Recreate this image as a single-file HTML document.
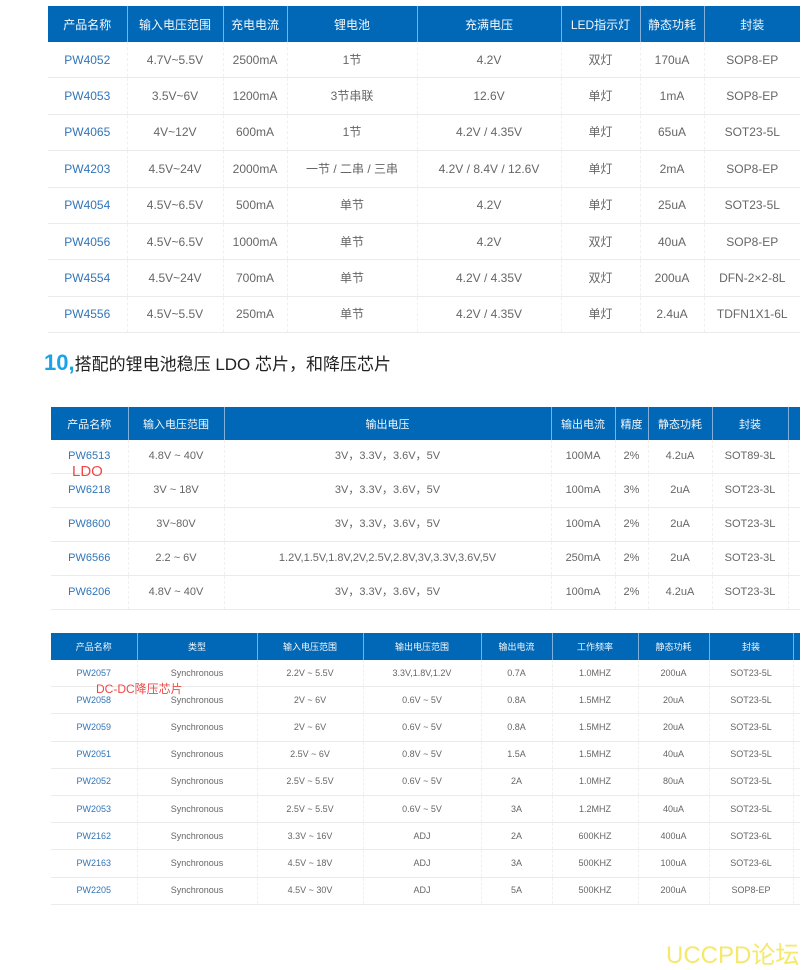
<!DOCTYPE html>
<html><head><meta charset="utf-8"><style>
body{margin:0;width:806px;height:966px;background:#fff;position:relative;overflow:hidden;font-family:"Liberation Sans","Noto Sans CJK SC",sans-serif;}
table{position:absolute;border-collapse:collapse;table-layout:fixed;}
th{background:#0068b7;color:#f4f8fc;font-weight:normal;border-left:1px solid #7fb0dc;padding:0;text-align:center;}
th:first-child{border-left:none;}
td{padding:0;text-align:center;color:#666;border-bottom:1px solid #ebebeb;border-left:1px dashed #f0f0f0;line-height:1;}
td:first-child{color:#3275b8;border-left:none;}
#t1{left:48px;top:6px;width:752px;font-size:12px;}
#t1 th{height:36px;font-size:12px}
#t1 td{height:35.4px}
#t2{left:51px;top:407px;width:749px;font-size:11px;}
#t2 th{height:33px}
#t2 td{height:33px}
#t3{left:51px;top:633px;width:749px;font-size:9px;}
#t3 th{height:27px}
#t3 td{height:26.2px}
.lbl{position:absolute;color:#f04848;}
</style></head><body>
<table id="t1">
<colgroup><col style="width:79px"><col style="width:96px"><col style="width:64px"><col style="width:130px"><col style="width:144px"><col style="width:79px"><col style="width:64px"><col style="width:96px"></colgroup>
<tr><th>产品名称</th><th>输入电压范围</th><th>充电电流</th><th>锂电池</th><th>充满电压</th><th>LED指示灯</th><th>静态功耗</th><th>封装</th></tr>
<tr><td>PW4052</td><td>4.7V~5.5V</td><td>2500mA</td><td>1节</td><td>4.2V</td><td>双灯</td><td>170uA</td><td>SOP8-EP</td></tr>
<tr><td>PW4053</td><td>3.5V~6V</td><td>1200mA</td><td>3节串联</td><td>12.6V</td><td>单灯</td><td>1mA</td><td>SOP8-EP</td></tr>
<tr><td>PW4065</td><td>4V~12V</td><td>600mA</td><td>1节</td><td>4.2V / 4.35V</td><td>单灯</td><td>65uA</td><td>SOT23-5L</td></tr>
<tr><td>PW4203</td><td>4.5V~24V</td><td>2000mA</td><td>一节 / 二串 / 三串</td><td>4.2V / 8.4V / 12.6V</td><td>单灯</td><td>2mA</td><td>SOP8-EP</td></tr>
<tr><td>PW4054</td><td>4.5V~6.5V</td><td>500mA</td><td>单节</td><td>4.2V</td><td>单灯</td><td>25uA</td><td>SOT23-5L</td></tr>
<tr><td>PW4056</td><td>4.5V~6.5V</td><td>1000mA</td><td>单节</td><td>4.2V</td><td>双灯</td><td>40uA</td><td>SOP8-EP</td></tr>
<tr><td>PW4554</td><td>4.5V~24V</td><td>700mA</td><td>单节</td><td>4.2V / 4.35V</td><td>双灯</td><td>200uA</td><td>DFN-2×2-8L</td></tr>
<tr><td>PW4556</td><td>4.5V~5.5V</td><td>250mA</td><td>单节</td><td>4.2V / 4.35V</td><td>单灯</td><td>2.4uA</td><td>TDFN1X1-6L</td></tr>
</table>
<div style="position:absolute;left:44px;top:350px;font-size:17px;color:#222;white-space:nowrap"><span style="color:#1aa3e8;font-size:22px;font-weight:bold">10,</span>搭配的锂电池稳压 LDO 芯片，和降压芯片</div>
<table id="t2">
<colgroup><col style="width:77px"><col style="width:96px"><col style="width:327px"><col style="width:64px"><col style="width:33px"><col style="width:64px"><col style="width:76px"><col style="width:12px"></colgroup>
<tr><th>产品名称</th><th>输入电压范围</th><th>输出电压</th><th>输出电流</th><th>精度</th><th>静态功耗</th><th>封装</th><th></th></tr>
<tr><td>PW6513</td><td>4.8V ~ 40V</td><td>3V，3.3V，3.6V，5V</td><td>100MA</td><td>2%</td><td>4.2uA</td><td>SOT89-3L</td><td></td></tr>
<tr><td>PW6218</td><td>3V ~ 18V</td><td>3V，3.3V，3.6V，5V</td><td>100mA</td><td>3%</td><td>2uA</td><td>SOT23-3L</td><td></td></tr>
<tr><td>PW8600</td><td>3V~80V</td><td>3V，3.3V，3.6V，5V</td><td>100mA</td><td>2%</td><td>2uA</td><td>SOT23-3L</td><td></td></tr>
<tr><td>PW6566</td><td>2.2 ~ 6V</td><td>1.2V,1.5V,1.8V,2V,2.5V,2.8V,3V,3.3V,3.6V,5V</td><td>250mA</td><td>2%</td><td>2uA</td><td>SOT23-3L</td><td></td></tr>
<tr><td>PW6206</td><td>4.8V ~ 40V</td><td>3V，3.3V，3.6V，5V</td><td>100mA</td><td>2%</td><td>4.2uA</td><td>SOT23-3L</td><td></td></tr>
</table>
<div class="lbl" style="left:72px;top:463px;font-size:15px">LDO</div>
<table id="t3">
<colgroup><col style="width:86px"><col style="width:120px"><col style="width:106px"><col style="width:118px"><col style="width:71px"><col style="width:86px"><col style="width:71px"><col style="width:84px"><col style="width:7px"></colgroup>
<tr><th>产品名称</th><th>类型</th><th>输入电压范围</th><th>输出电压范围</th><th>输出电流</th><th>工作频率</th><th>静态功耗</th><th>封装</th><th></th></tr>
<tr><td>PW2057</td><td>Synchronous</td><td>2.2V ~ 5.5V</td><td>3.3V,1.8V,1.2V</td><td>0.7A</td><td>1.0MHZ</td><td>200uA</td><td>SOT23-5L</td><td></td></tr>
<tr><td>PW2058</td><td>Synchronous</td><td>2V ~ 6V</td><td>0.6V ~ 5V</td><td>0.8A</td><td>1.5MHZ</td><td>20uA</td><td>SOT23-5L</td><td></td></tr>
<tr><td>PW2059</td><td>Synchronous</td><td>2V ~ 6V</td><td>0.6V ~ 5V</td><td>0.8A</td><td>1.5MHZ</td><td>20uA</td><td>SOT23-5L</td><td></td></tr>
<tr><td>PW2051</td><td>Synchronous</td><td>2.5V ~ 6V</td><td>0.8V ~ 5V</td><td>1.5A</td><td>1.5MHZ</td><td>40uA</td><td>SOT23-5L</td><td></td></tr>
<tr><td>PW2052</td><td>Synchronous</td><td>2.5V ~ 5.5V</td><td>0.6V ~ 5V</td><td>2A</td><td>1.0MHZ</td><td>80uA</td><td>SOT23-5L</td><td></td></tr>
<tr><td>PW2053</td><td>Synchronous</td><td>2.5V ~ 5.5V</td><td>0.6V ~ 5V</td><td>3A</td><td>1.2MHZ</td><td>40uA</td><td>SOT23-5L</td><td></td></tr>
<tr><td>PW2162</td><td>Synchronous</td><td>3.3V ~ 16V</td><td>ADJ</td><td>2A</td><td>600KHZ</td><td>400uA</td><td>SOT23-6L</td><td></td></tr>
<tr><td>PW2163</td><td>Synchronous</td><td>4.5V ~ 18V</td><td>ADJ</td><td>3A</td><td>500KHZ</td><td>100uA</td><td>SOT23-6L</td><td></td></tr>
<tr><td>PW2205</td><td>Synchronous</td><td>4.5V ~ 30V</td><td>ADJ</td><td>5A</td><td>500KHZ</td><td>200uA</td><td>SOP8-EP</td><td></td></tr>
</table>
<div class="lbl" style="left:96px;top:680px;font-size:12px">DC-DC降压芯片</div>
<div style="position:absolute;left:666px;top:935px;font-size:24px;color:#f5e86a;white-space:nowrap">UCCPD论坛</div>
</body></html>
